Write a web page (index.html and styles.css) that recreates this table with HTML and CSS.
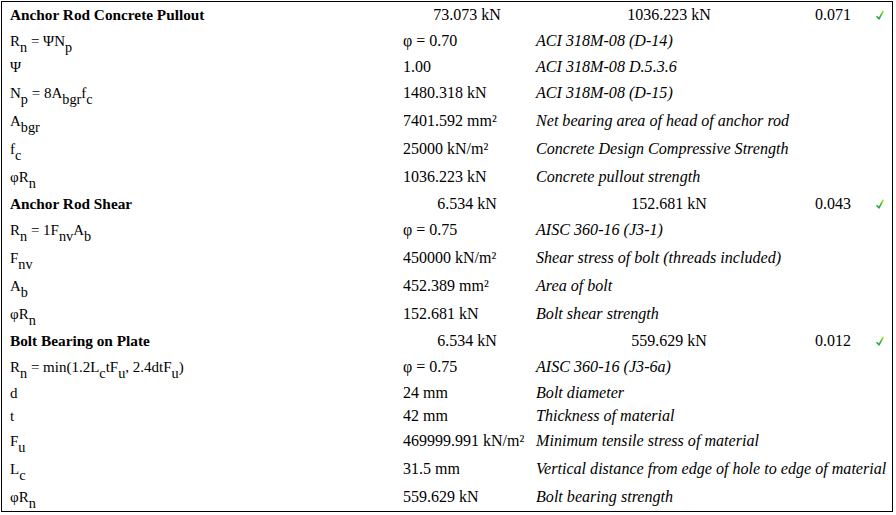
FILE: index.html
```html
<!DOCTYPE html>
<html lang="en">
<head>
<meta charset="utf-8">
<title>Anchor rod checks</title>
<link rel="stylesheet" href="styles.css">
</head>
<body>
<svg class="defs" width="0" height="0" aria-hidden="true">
  <defs>
    <linearGradient id="okg" x1="0" y1="1" x2="1" y2="0">
      <stop offset="0" stop-color="#1f9a3a"/>
      <stop offset="0.6" stop-color="#3cc23c"/>
      <stop offset="1" stop-color="#c8ea2a"/>
    </linearGradient>
  </defs>
</svg>
<div class="sheet">
  <div class="group">
    <div class="head">
      <span class="name">Anchor Rod Concrete Pullout</span>
      <span class="num">73.073 kN</span>
      <span class="num">1036.223 kN</span>
      <span class="num">0.071</span>
      <span class="ok"><svg width="8" height="10" viewBox="0 0 8 10"><path d="M0.6 6.2 L3 8.8 L7.4 0.6" fill="none" stroke="url(#okg)" stroke-width="1.6" stroke-linejoin="round"/></svg></span>
    </div>
    <div class="row tall"><span class="lab">R<sub>n</sub> = ΨN<sub>p</sub></span><span class="val">φ = 0.70</span><span class="ref">ACI 318M-08 (D-14)</span></div>
    <div class="row"><span class="lab">Ψ</span><span class="val">1.00</span><span class="ref">ACI 318M-08 D.5.3.6</span></div>
    <div class="row tall"><span class="lab">N<sub>p</sub> = 8A<sub>bgr</sub>f<sub>c</sub></span><span class="val">1480.318 kN</span><span class="ref">ACI 318M-08 (D-15)</span></div>
    <div class="row tall"><span class="lab">A<sub>bgr</sub></span><span class="val">7401.592 mm²</span><span class="ref">Net bearing area of head of anchor rod</span></div>
    <div class="row tall"><span class="lab">f<sub>c</sub></span><span class="val">25000 kN/m²</span><span class="ref">Concrete Design Compressive Strength</span></div>
    <div class="row tall"><span class="lab">φR<sub>n</sub></span><span class="val">1036.223 kN</span><span class="ref">Concrete pullout strength</span></div>
  </div>
  <div class="group">
    <div class="head">
      <span class="name">Anchor Rod Shear</span>
      <span class="num">6.534 kN</span>
      <span class="num">152.681 kN</span>
      <span class="num">0.043</span>
      <span class="ok"><svg width="8" height="10" viewBox="0 0 8 10"><path d="M0.6 6.2 L3 8.8 L7.4 0.6" fill="none" stroke="url(#okg)" stroke-width="1.6" stroke-linejoin="round"/></svg></span>
    </div>
    <div class="row tall"><span class="lab">R<sub>n</sub> = 1F<sub>nv</sub>A<sub>b</sub></span><span class="val">φ = 0.75</span><span class="ref">AISC 360-16 (J3-1)</span></div>
    <div class="row tall"><span class="lab">F<sub>nv</sub></span><span class="val">450000 kN/m²</span><span class="ref">Shear stress of bolt (threads included)</span></div>
    <div class="row tall"><span class="lab">A<sub>b</sub></span><span class="val">452.389 mm²</span><span class="ref">Area of bolt</span></div>
    <div class="row tall"><span class="lab">φR<sub>n</sub></span><span class="val">152.681 kN</span><span class="ref">Bolt shear strength</span></div>
  </div>
  <div class="group">
    <div class="head">
      <span class="name">Bolt Bearing on Plate</span>
      <span class="num">6.534 kN</span>
      <span class="num">559.629 kN</span>
      <span class="num">0.012</span>
      <span class="ok"><svg width="8" height="10" viewBox="0 0 8 10"><path d="M0.6 6.2 L3 8.8 L7.4 0.6" fill="none" stroke="url(#okg)" stroke-width="1.6" stroke-linejoin="round"/></svg></span>
    </div>
    <div class="row tall"><span class="lab">R<sub>n</sub> = min(1.2L<sub>c</sub>tF<sub>u</sub>, 2.4dtF<sub>u</sub>)</span><span class="val">φ = 0.75</span><span class="ref">AISC 360-16 (J3-6a)</span></div>
    <div class="row short"><span class="lab">d</span><span class="val">24 mm</span><span class="ref">Bolt diameter</span></div>
    <div class="row short"><span class="lab">t</span><span class="val">42 mm</span><span class="ref">Thickness of material</span></div>
    <div class="row tall"><span class="lab">F<sub>u</sub></span><span class="val">469999.991 kN/m²</span><span class="ref">Minimum tensile stress of material</span></div>
    <div class="row tall"><span class="lab">L<sub>c</sub></span><span class="val">31.5 mm</span><span class="ref">Vertical distance from edge of hole to edge of material</span></div>
    <div class="row tall"><span class="lab">φR<sub>n</sub></span><span class="val">559.629 kN</span><span class="ref">Bolt bearing strength</span></div>
  </div>
</div>
</body>
</html>
```

FILE: styles.css
```css
html, body {
  margin: 0;
  background: #ffffff;
}

body {
  font-family: "Liberation Serif", "Times New Roman", serif;
  font-size: 16px;
  color: #000000;
}

.defs {
  position: absolute;
  width: 0;
  height: 0;
}

.sheet {
  margin: 1px 0 0 1px;
  width: 890px;
  border: 1px solid #000000;
}

.head {
  display: grid;
  grid-template-columns: 393px 144px 260px 68px 1fr;
  align-items: center;
  min-height: 25px;
  line-height: 18px;
  white-space: nowrap;
}

.head .name {
  padding-left: 8px;
  font-weight: bold;
  font-size: 15.3px;
}

.head .num {
  text-align: center;
}

.head .ok {
  display: flex;
  justify-content: center;
  align-items: center;
}

.row {
  display: grid;
  grid-template-columns: 393px 133px 1fr;
  align-items: center;
  min-height: 24px;
  line-height: 18px;
  white-space: nowrap;
}

.row.tall {
  min-height: 28px;
}

.row.short {
  min-height: 23px;
}

.row > span {
  padding-left: 8px;
}

.lab {
  font-size: 15px;
}

.ref {
  font-style: italic;
  font-size: 16.1px;
}

sub {
  font-size: 0.95em;
  line-height: 0;
  vertical-align: -6px;
}
```
